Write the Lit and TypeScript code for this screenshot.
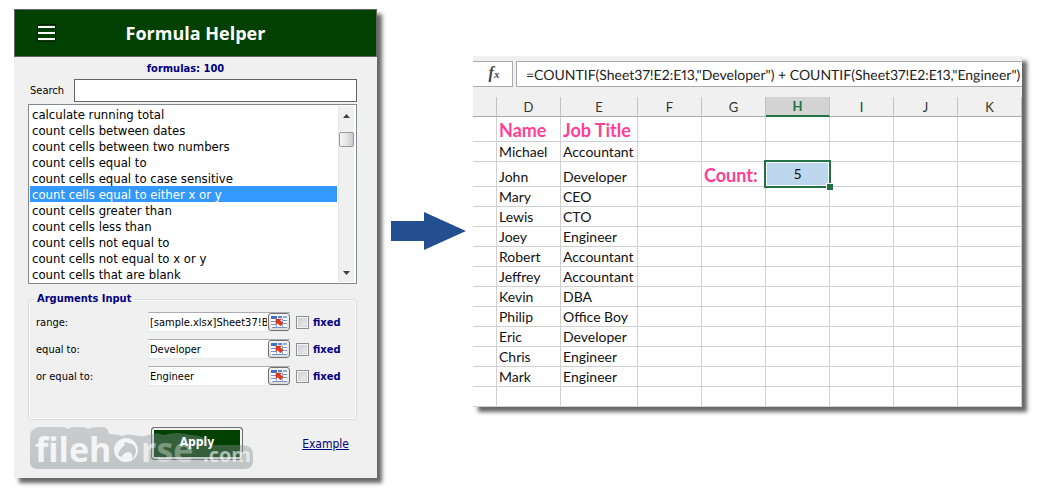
import { LitElement, html, css, svg } from "lit";
import { customElement, property, state } from "lit/decorators.js";

const FORMULAS = [
  "calculate running total",
  "count cells between dates",
  "count cells between two numbers",
  "count cells equal to",
  "count cells equal to case sensitive",
  "count cells equal to either x or y",
  "count cells greater than",
  "count cells less than",
  "count cells not equal to",
  "count cells not equal to x or y",
  "count cells that are blank",
];

const ARGS = [
  { id: "range", label: "range:", value: "[sample.xlsx]Sheet37!B2:B13" },
  { id: "eq", label: "equal to:", value: "Developer" },
  { id: "oreq", label: "or equal to:", value: "Engineer" },
];

const COLUMNS = ["D", "E", "F", "G", "H", "I", "J", "K"];

const PEOPLE = [
  ["Michael", "Accountant"],
  ["John", "Developer"],
  ["Mary", "CEO"],
  ["Lewis", "CTO"],
  ["Joey", "Engineer"],
  ["Robert", "Accountant"],
  ["Jeffrey", "Accountant"],
  ["Kevin", "DBA"],
  ["Philip", "Office Boy"],
  ["Eric", "Developer"],
  ["Chris", "Engineer"],
  ["Mark", "Engineer"],
  ["", ""],
];

const pickerIcon = svg`
  <rect x="0" y="1" width="16" height="11" fill="#fbfdff"/>
  <rect x="0" y="0" width="6" height="3" fill="#3f6fc4"/>
  <rect x="7" y="0" width="4" height="2" fill="#5c86cf"/>
  <rect x="12" y="0" width="4" height="2" fill="#8fa9d8"/>
  <path d="M0 5.500h5M0 8.500h5M12 4.500h4M12 7.500h4M1 11.500h15" stroke="#7795cc" stroke-width="1"/>
  <path d="M5.500 2v9M11.500 2v9" stroke="#9bb2dc" stroke-width="1"/>
  <path d="M5 3h5.500l-1.500 1.500 3 2.500-2.500 3-3-3L5 8.500z" fill="#dd3b1f" stroke="#b72a14" stroke-width=".5"/>`;

@customElement("formula-panel")
export class FormulaPanel extends LitElement {
  @state() private chosen = 5;

  static styles = css`
    :host { display: block; color: #000; font-family: "DejaVu Sans Condensed", "DejaVu Sans", sans-serif; font-stretch: condensed; font-size: 11px; }
    * { box-sizing: border-box; }
    input, select, button { font: inherit; color: inherit; margin: 0; }
    .panel { position: relative; background: #f0f0f0; box-shadow: 5px 5px 4px rgba(0, 0, 0, .6); padding-bottom: 18px; }
    .head { display: grid; grid-template-columns: 62px 1fr 62px; align-items: center; height: 48px; background: #004000; border: 1px solid #646464; }
    .menu { justify-self: center; width: 19px; height: 18px; padding: 1px 0; border: 1px solid #001c00; background: #004000; display: block; }
    .menu svg { display: block; }
    h1 { margin: 0; text-align: center; color: #fff; font: 700 18px/24px "Open Sans", "Noto Sans", sans-serif; font-stretch: normal; }
    .total { padding: 4px 0 3px; margin-right: 14px; text-align: center; color: #000080; font-weight: bold; line-height: 15px; }
    .body { padding: 0 20px 0 14px; }
    .search { display: flex; align-items: center; gap: 10px; padding-left: 2px; }
    .search label { width: 34px; white-space: nowrap; }
    .search input { flex: 1; min-width: 0; height: 23px; border: 1px solid #646464; background: #fff; }
    .list { display: flex; margin-top: 2px; border: 1px solid #828790; background: #fff; padding: 1px; }
    .list select { flex: 1; min-width: 0; height: 176px; padding: 0; border: 0; outline: 0; background: #fff; font-size: 13px; overflow: hidden; scrollbar-width: none; }
    .list option { display: block; height: 16px; min-height: 16px; padding: 1px 2px 0; line-height: 15px; }
    .list option:checked { background-image: linear-gradient(#3399ff, #3399ff); -webkit-text-fill-color: #fff; }
    .bar { width: 17px; margin-left: 1px; display: flex; flex-direction: column; align-items: center; background: #f0f0f0; border-right: 1px solid #fff; border-left: 1px solid #e6e6e6; }
    .bar svg { display: block; }
    .tri { margin-top: 8px; }
    .thumb { width: 15px; height: 15px; margin-top: 14px; border: 1px solid #979797; border-radius: 2px; background: linear-gradient(90deg, #f6f6f6, #e4e6e8 45%, #c8ccd0); }
    .end { margin: auto 0 7px; }
    fieldset { margin: 8px 0 0; min-width: 0; height: 128px; padding: 6px 13px 0 7px; border: 1px solid #d5dfe5; border-radius: 3px; box-shadow: inset 0 0 0 1px #f8fafb; }
    legend { padding: 0 2px; margin-left: -1px; color: #000080; font-weight: bold; line-height: 14px; }
    .row { display: flex; align-items: center; height: 20px; margin-bottom: 7px; }
    .row > label:first-child { flex: 0 0 112px; }
    .field { flex: 1; min-width: 0; display: flex; align-items: center; height: 20px; background: #fff; border: 1px solid #e3e9ef; border-top-color: #abadb3; border-right: 0; }
    .field input { flex: 1; min-width: 0; width: 0; padding: 0 1px; border: 0; outline: 0; background: transparent; font-size: 11px; }
    .pick { flex: 0 0 22px; height: 18px; padding: 2px; border: 1px solid #707070; border-radius: 3px; background: linear-gradient(#f4f4f4, #dcdcdc); display: flex; align-items: center; justify-content: center; }
    .tick { appearance: none; width: 13px; height: 13px; margin: 0 4px 0 6px; border: 1px solid #8e8f8f; background: linear-gradient(135deg, #c4c9cf, #f6f6f6); box-shadow: inset 0 0 0 1px #f4f4f4, inset 0 0 0 2px #d3d6da; }
    .fixed { width: 30px; color: #000080; font-weight: bold; }
    .foot { display: grid; grid-template-columns: 1fr 92px 1fr; align-items: center; margin: 7px 0 0; padding: 0 8px 0 17px; }
    .apply { grid-column: 2; height: 33px; border: 1px solid #707070; border-radius: 3px; background: #004000; box-shadow: inset 0 0 0 2px #f0f0f0; color: #fff; font-weight: bold; font-size: 12px; padding: 0 0 3px; }
    .apply span { position: relative; z-index: 2; }
    .foot a { grid-column: 3; justify-self: end; color: #000080; font-size: 12px; line-height: 16px; }
    .mark { position: absolute; z-index: 1; left: 14px; bottom: 6px; overflow: visible; pointer-events: none; font-stretch: normal; }
  `;

  render() {
    return html`
      <section class="panel">
        <header class="head">
          <button class="menu" aria-label="Menu">
            <svg width="17" height="14" viewBox="0 0 17 14"><path d="M0 1h17M0 7h17M0 13h17" stroke="#fff" stroke-width="2"/></svg>
          </button>
          <h1>Formula Helper</h1>
        </header>
        <div class="body">
          <div class="total">formulas: 100</div>
          <div class="search"><label for="q">Search</label><input id="q" type="text" /></div>
          <div class="list">
            <select size="11" aria-label="Formulas" @change=${(e: Event) => (this.chosen = (e.target as HTMLSelectElement).selectedIndex)}>
              ${FORMULAS.map((f, i) => html`<option ?selected=${i === this.chosen}>${f}</option>`)}
            </select>
            <div class="bar" aria-hidden="true">
              <svg class="tri" width="7" height="4" viewBox="0 0 7 4"><path d="M0 4 3.500 0 7 4z" fill="#404040"/></svg>
              <div class="thumb"></div>
              <svg class="tri end" width="7" height="4" viewBox="0 0 7 4"><path d="M0 0 3.500 4 7 0z" fill="#404040"/></svg>
            </div>
          </div>
          <fieldset>
            <legend>Arguments Input</legend>
            ${ARGS.map((a) => html`
              <div class="row">
                <label for=${a.id}>${a.label}</label>
                <div class="field">
                  <input id=${a.id} type="text" .value=${a.value} />
                  <button class="pick" aria-label="Select cells">
                    <svg width="16" height="12" viewBox="0 0 16 12">${pickerIcon}</svg>
                  </button>
                </div>
                <input class="tick" type="checkbox" id=${a.id + "-fixed"} />
                <label class="fixed" for=${a.id + "-fixed"}>fixed</label>
              </div>`)}
          </fieldset>
          <div class="foot"><button class="apply"><span>Apply</span></button><a href="#example">Example</a></div>
        </div>
        <svg class="mark" width="230" height="46" viewBox="0 0 230 46" font-family="Open Sans, Noto Sans, sans-serif" font-weight="700" aria-hidden="true">
          <defs>
            <linearGradient id="g" x1="0" y1="0" x2="0" y2="1"><stop offset="0" stop-color="#8f989d"/><stop offset="1" stop-color="#77838a"/></linearGradient>
            <linearGradient id="w" gradientUnits="userSpaceOnUse" x1="112" y1="0" x2="130" y2="0"><stop offset="0" stop-color="#fff" stop-opacity=".8"/><stop offset="1" stop-color="#fff" stop-opacity=".35"/></linearGradient>
          </defs>
          <path opacity=".4" fill="url(#g)" d="M10 1H35Q38 1 40 3Q42 1 46 1H54Q58 1 60 3Q64 1 70 1H75Q80 1 81 8Q89 8 94 10Q100 7 110 10Q116 11 120 9Q128 6 136 9Q150 5 162 9Q176 8 182 19H215Q225 20 225 28V36Q224 43 217 43H10Q2 43 2 36V11Q2 3 10 1Z"/>
          <g fill="url(#w)">
            <text x="7" y="36" font-size="34">fileh</text>
            <text x="113" y="36" font-size="34">rse</text>
            <text x="175" y="36" font-size="20" fill="#fff" fill-opacity=".6">.com</text>
            <path fill="#fff" fill-opacity=".8" fill-rule="evenodd" d="M98 12A12 12 0 1 1 97.900 12ZM90 29Q92 22 97 19L96 16 100 17Q107 18 108 24Q108 29 104 33Q105 28 102 26Q99 26 97 27L93 31Z"/>
          </g>
        </svg>
      </section>`;
  }
}

@customElement("result-sheet")
export class ResultSheet extends LitElement {
  @property() formula = '=COUNTIF(Sheet37!E2:E13,"Developer") + COUNTIF(Sheet37!E2:E13,"Engineer")';

  static styles = css`
    :host { display: block; font-family: Lato, "Open Sans", sans-serif; font-size: 14px; color: #111; }
    * { box-sizing: border-box; }
    .sheet { background: #fff; box-shadow: 5px 5px 4px rgba(0, 0, 0, .6); }
    .top { display: flex; gap: 3px; padding: 5px 0 10px; background: #f0f0f0; }
    .fx { width: 40px; height: 26px; padding: 0 0 2px 3px; border: 1px solid #ababab; border-left: 0; background: #fff; color: #444; font: italic bold 16px/20px "Liberation Serif", serif; }
    .fx small { font-size: 11px; }
    .formula { flex: 1; min-width: 0; height: 26px; padding: 0 0 0 9px; border: 1px solid #ababab; border-right: 0; background: #fff; font: inherit; font-size: 14px; font-variant-numeric: proportional-nums; text-rendering: geometricPrecision; color: #222; outline: 0; }
    table { width: 100%; table-layout: fixed; border-collapse: separate; border-spacing: 0; }
    .c0 { width: 24px; } .c { width: 64px; } .wide { width: 77px; }
    th, td { height: 20px; padding: 0 0 0 2px; border-right: 1px solid #d0d0d0; border-bottom: 1px solid #d0d0d0; line-height: 18px; text-align: left; vertical-align: bottom; white-space: nowrap; font-weight: 400; }
    thead th { padding: 0; text-align: center; background: #f0f0f0; border-right-color: #c2c2c2; border-bottom-color: #ababab; color: #333; font-size: 13px; }
    thead th.on { background: #d3d3d3; color: #217346; font-weight: 700; border-bottom: 2px solid #217346; }
    .tall > td { height: 25px; }
    td.pink { color: #ff3f95; font-weight: 700; font-size: 18px; line-height: 22px; }
    td.count { text-align: right; padding-right: 8px; }
    td.sel { position: relative; text-align: center; vertical-align: middle; padding: 0; background: #bdd7ee; }
    td.sel::before { content: ""; position: absolute; inset: -2px; border: 2px solid #217346; box-shadow: inset 0 0 0 1px #fff; }
    td.sel::after { content: ""; position: absolute; right: -4px; bottom: -4px; width: 6px; height: 6px; background: #217346; border: solid #fff; border-width: 1px 0 0 1px; }
  `;

  render() {
    return html`
      <section class="sheet">
        <div class="top">
          <button class="fx" aria-label="Insert function">f<small>x</small></button>
          <input class="formula" aria-label="Formula" type="text" .value=${this.formula} />
        </div>
        <table>
          <colgroup>
            <col class="c0" /><col class="c" /><col class="wide" />
            ${[1, 2, 3, 4, 5, 6].map(() => html`<col class="c" />`)}
          </colgroup>
          <thead>
            <tr><th></th>${COLUMNS.map((c) => html`<th scope="col" class=${c === "H" ? "on" : ""}>${c}</th>`)}</tr>
          </thead>
          <tbody>
            <tr class="tall"><td></td><td class="pink">Name</td><td class="pink">Job Title</td>${this.blanks(6)}</tr>
            ${PEOPLE.map(([name, job], i) => html`
              <tr class=${i === 1 ? "tall" : ""}>
                <td></td><td>${name}</td><td>${job}</td>
                ${i === 1
                  ? html`<td></td><td class="pink count">Count:</td><td class="sel">5</td>${this.blanks(3)}`
                  : this.blanks(6)}
              </tr>`)}
          </tbody>
        </table>
      </section>`;
  }

  private blanks(n: number) {
    return Array.from({ length: n }, () => html`<td></td>`);
  }
}

@customElement("app-root")
export class AppRoot extends LitElement {
  static styles = css`
    :host { display: block; background: #fff; }
    .page { display: flex; align-items: flex-start; padding: 9px 21px 21px 14px; }
    formula-panel { flex: 363 1 0; min-width: 0; }
    result-sheet { flex: 549 1 0; min-width: 0; margin-top: 47px; }
    .arrow { flex: none; margin: 203px 7px 0 14px; }
  `;

  render() {
    return html`
      <main class="page">
        <formula-panel></formula-panel>
        <svg class="arrow" width="75" height="38" viewBox="0 0 75 38" aria-hidden="true"><path d="M0 9H33V0L75 19 33 38V29H0z" fill="#234f90"/></svg>
        <result-sheet></result-sheet>
      </main>`;
  }
}
